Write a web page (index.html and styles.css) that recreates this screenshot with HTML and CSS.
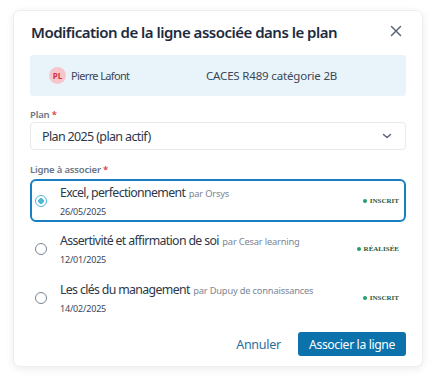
FILE: index.html
```html
<!DOCTYPE html>
<html lang="fr">
<head>
<meta charset="utf-8">
<link rel="stylesheet" href="styles.css">
</head>
<body>
<div class="modal">
  <div class="header">
    <h1 class="title">Modification de la ligne associée dans le plan</h1>
    <button class="close" aria-label="Fermer">
      <svg width="12" height="12" viewBox="0 0 12 12"><path d="M1.5 1.5L10.5 10.5M10.5 1.5L1.5 10.5" stroke="#5b6577" stroke-width="1.5" stroke-linecap="round"/></svg>
    </button>
  </div>
  <div class="info">
    <div class="person"><span class="avatar">PL</span><span class="name">Pierre Lafont</span></div>
    <div class="course">CACES R489 catégorie 2B</div>
  </div>
  <div class="field">
    <label class="label">Plan <span class="req">*</span></label>
    <div class="select">
      <span>Plan 2025 (plan actif)</span>
      <svg width="12" height="8" viewBox="0 0 12 8"><path d="M2.5 2.5L6 5.5L9.5 2.5" fill="none" stroke="#5b6577" stroke-width="1.5" stroke-linecap="round" stroke-linejoin="round"/></svg>
    </div>
  </div>
  <div class="field second">
    <label class="label">Ligne à associer <span class="req">*</span></label>
    <div class="options">
      <div class="option selected">
        <span class="radio on"></span>
        <div class="otext">
          <div class="otitle">Excel, perfectionnement <span class="by">par Orsys</span></div>
          <div class="odate">26/05/2025</div>
        </div>
        <span class="badge">INSCRIT</span>
      </div>
      <div class="option">
        <span class="radio"></span>
        <div class="otext">
          <div class="otitle">Assertivité et affirmation de soi <span class="by">par Cesar learning</span></div>
          <div class="odate">12/01/2025</div>
        </div>
        <span class="badge">RÉALISÉE</span>
      </div>
      <div class="option">
        <span class="radio"></span>
        <div class="otext">
          <div class="otitle">Les clés du management <span class="by">par Dupuy de connaissances</span></div>
          <div class="odate">14/02/2025</div>
        </div>
        <span class="badge">INSCRIT</span>
      </div>
    </div>
  </div>
  <div class="footer">
    <button class="cancel">Annuler</button>
    <button class="primary">Associer la ligne</button>
  </div>
</div>
</body>
</html>
```
FILE: styles.css
```css
* { box-sizing: border-box; }
html, body { margin: 0; background: #ffffff; }
body {
  padding: 10px 13px;
  font-family: "Noto Sans", sans-serif;
  letter-spacing: -0.04em;
  color: #283548;
}
.modal {
  width: 410px;
  height: 357px;
  background: #fff;
  border: 1px solid #eceef1;
  border-radius: 7px;
  box-shadow: 0 2px 8px rgba(0,0,0,0.08);
  padding: 7px 16px 0 16px;
  display: flex;
  flex-direction: column;
}
.header {
  display: flex;
  justify-content: space-between;
  align-items: flex-start;
  height: 37px;
}
.title {
  margin: 0;
  padding-top: 2px;
  padding-left: 1px;
  font-size: 15px;
  font-weight: 600;
  letter-spacing: -0.5px;
  color: #1e2b3f;
  line-height: 24px;
  white-space: nowrap;
}
.close {
  border: 0;
  background: none;
  padding: 0;
  margin: 7px 4px 0 0;
  width: 12px;
  height: 12px;
  display: flex;
}
.info {
  background: #e9f4fa;
  border-radius: 3px;
  height: 41px;
  display: flex;
  align-items: center;
  padding-left: 19px;
  font-size: 11px;
  color: #3b4658;
}
.person { display: flex; align-items: center; width: 157px; }
.course { font-size: 11.5px; letter-spacing: -0.015em; }
.avatar {
  width: 17px;
  height: 17px;
  border-radius: 50%;
  background: #f7c6cc;
  color: #cf2f3d;
  font-size: 8px;
  font-weight: 700;
  letter-spacing: 0;
  display: flex;
  align-items: center;
  justify-content: center;
  margin-right: 5px;
}
.field { margin-top: 12px; }
.field.second { margin-top: 13px; }
.label {
  display: block;
  font-size: 9.5px;
  color: #6b7586;
  font-weight: 600;
  letter-spacing: -0.02em;
  line-height: 14px;
}
.req { color: #d33a3a; }
.select {
  height: 28px;
  border: 1px solid #e7e9ed;
  border-radius: 4px;
  display: flex;
  align-items: center;
  justify-content: space-between;
  padding: 0 12px 0 11px;
  font-size: 12.5px;
  color: #2c3749;
}
.options { display: flex; flex-direction: column; margin-top: 2px; }
.option {
  height: 43px;
  display: flex;
  align-items: center;
  padding: 0 4px 0 3px;
  border: 2px solid transparent;
  border-radius: 6px;
  margin-bottom: 5.5px;
}
.option.selected { border-color: #1a7fc0; }
.radio {
  width: 12px;
  height: 12px;
  border: 1.2px solid #7a8494;
  border-radius: 50%;
  margin-right: 13px;
  flex: none;
}
.radio.on {
  border-color: #4fb8d8;
  background: radial-gradient(circle, #4fb8d8 0 2.6px, transparent 3px);
}
.otext { flex: 1; padding-top: 1px; }
.otitle { font-size: 12.3px; color: #2c3749; line-height: 18px; }
.by { font-size: 9.3px; color: #7a8494; letter-spacing: -0.02em; margin-left: 1px; }
.odate { font-size: 9px; color: #3b4658; line-height: 14px; margin-top: 2px; letter-spacing: -0.02em; }
.badge {
  font-family: "Liberation Serif", serif;
  font-size: 7px;
  font-weight: 700;
  letter-spacing: 0;
  color: #1f5a3a;
  display: flex;
  align-items: center;
  gap: 3px;
  margin-right: 1px;
}
.badge::before {
  content: "";
  width: 4px;
  height: 4px;
  border-radius: 50%;
  background: #22a06b;
}
.footer {
  margin-top: auto;
  padding-bottom: 10px;
  display: flex;
  justify-content: flex-end;
  align-items: center;
  gap: 17px;
}
.cancel {
  border: 0;
  background: none;
  font-family: inherit;
  letter-spacing: -0.02em;
  font-size: 12.5px;
  color: #2a6f9e;
  height: 24px;
  padding: 0;
}
.primary {
  border: 0;
  background: #0b72ac;
  color: #fff;
  font-family: inherit;
  letter-spacing: -0.03em;
  font-size: 12.2px;
  border-radius: 3px;
  height: 24px;
  width: 108px;
  padding: 0;
}
```
